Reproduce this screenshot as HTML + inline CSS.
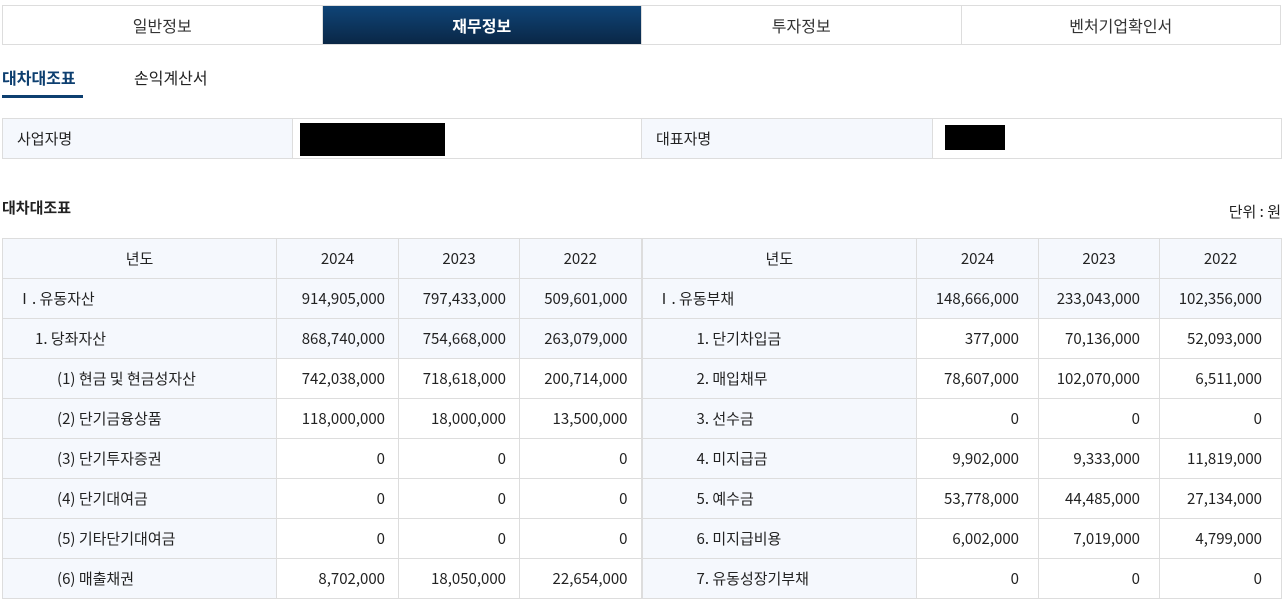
<!DOCTYPE html>
<html><head><meta charset="utf-8"><style>
*{box-sizing:border-box;margin:0;padding:0}
body{width:1287px;height:599px;overflow:hidden;background:#fff;font-family:"Noto Sans CJK KR","Liberation Sans",sans-serif;color:#222;font-size:15px;position:relative}
.abs{position:absolute}
.tabs{left:2px;top:5px;width:1279px;height:40px;display:flex;border:1px solid #ddd}
.tabs div{flex:1;text-align:center;line-height:38px;font-size:16px;border-left:1px solid #ddd;color:#333}
.tabs div:first-child{border-left:none}
.tabs .on{background:linear-gradient(#0f4477,#0a2746);color:#fff;font-weight:bold}
table{border-collapse:collapse;position:absolute;table-layout:fixed}
td{border:1px solid #ddd;height:40px;padding:0 14px;line-height:20px}
.lb{background:#f5f8fd}
.r{text-align:right;padding-right:13px}
.rt .r{padding-right:19px}
.c{text-align:center}
</style></head><body>
<div class="abs tabs"><div>일반정보</div><div class="on">재무정보</div><div>투자정보</div><div>벤처기업확인서</div></div>
<div class="abs" style="left:2px;top:65px;font-size:16px;font-weight:bold;color:#0d3f70">대차대조표</div>
<div class="abs" style="left:2px;top:95px;width:81px;height:3px;background:#0d3f70"></div>
<div class="abs" style="left:134px;top:65px;font-size:16px">손익계산서</div>
<table style="left:2px;top:118px;width:1279px">
<col style="width:290px"><col style="width:349px"><col style="width:291px"><col style="width:349px">
<tr><td class="lb">사업자명</td><td></td><td class="lb">대표자명</td><td></td></tr></table>
<div class="abs" style="left:300px;top:123px;width:145px;height:33px;background:#000"></div>
<div class="abs" style="left:945px;top:125px;width:60px;height:25px;background:#000"></div>
<div class="abs" style="left:2px;top:197px;font-weight:bold">대차대조표</div>
<div class="abs" style="right:6px;top:201px">단위 : 원</div>
<table style="left:2px;top:238px;width:1279px">
<col style="width:274px"><col style="width:122px"><col style="width:121px"><col style="width:122px"><col style="width:275px"><col style="width:122px"><col style="width:121px"><col style="width:122px">
<tr class="lb"><td class="c">년도</td><td class="c">2024</td><td class="c">2023</td><td class="c" style="border-right:2px solid #ddd">2022</td><td class="c">년도</td><td class="c">2024</td><td class="c">2023</td><td class="c">2022</td></tr>
<tr class="lb rt2"><td>Ⅰ. 유동자산</td><td class="r">914,905,000</td><td class="r">797,433,000</td><td class="r" style="border-right:2px solid #ddd">509,601,000</td><td>Ⅰ. 유동부채</td><td class="r" style="padding-right:19px">148,666,000</td><td class="r" style="padding-right:19px">233,043,000</td><td class="r" style="padding-right:19px">102,356,000</td></tr>
<tr class="lb"><td style="padding-left:32px">1. 당좌자산</td><td class="r">868,740,000</td><td class="r">754,668,000</td><td class="r" style="border-right:2px solid #ddd">263,079,000</td><td style="padding-left:54px">1. 단기차입금</td><td class="r" style="background:#fff;padding-right:19px">377,000</td><td class="r" style="background:#fff;padding-right:19px">70,136,000</td><td class="r" style="background:#fff;padding-right:19px">52,093,000</td></tr>
<tr><td class="lb" style="padding-left:54px">(1) 현금 및 현금성자산</td><td class="r">742,038,000</td><td class="r">718,618,000</td><td class="r" style="border-right:2px solid #ddd">200,714,000</td><td class="lb" style="padding-left:54px">2. 매입채무</td><td class="r" style="padding-right:19px">78,607,000</td><td class="r" style="padding-right:19px">102,070,000</td><td class="r" style="padding-right:19px">6,511,000</td></tr>
<tr><td class="lb" style="padding-left:54px">(2) 단기금융상품</td><td class="r">118,000,000</td><td class="r">18,000,000</td><td class="r" style="border-right:2px solid #ddd">13,500,000</td><td class="lb" style="padding-left:54px">3. 선수금</td><td class="r" style="padding-right:19px">0</td><td class="r" style="padding-right:19px">0</td><td class="r" style="padding-right:19px">0</td></tr>
<tr><td class="lb" style="padding-left:54px">(3) 단기투자증권</td><td class="r">0</td><td class="r">0</td><td class="r" style="border-right:2px solid #ddd">0</td><td class="lb" style="padding-left:54px">4. 미지급금</td><td class="r" style="padding-right:19px">9,902,000</td><td class="r" style="padding-right:19px">9,333,000</td><td class="r" style="padding-right:19px">11,819,000</td></tr>
<tr><td class="lb" style="padding-left:54px">(4) 단기대여금</td><td class="r">0</td><td class="r">0</td><td class="r" style="border-right:2px solid #ddd">0</td><td class="lb" style="padding-left:54px">5. 예수금</td><td class="r" style="padding-right:19px">53,778,000</td><td class="r" style="padding-right:19px">44,485,000</td><td class="r" style="padding-right:19px">27,134,000</td></tr>
<tr><td class="lb" style="padding-left:54px">(5) 기타단기대여금</td><td class="r">0</td><td class="r">0</td><td class="r" style="border-right:2px solid #ddd">0</td><td class="lb" style="padding-left:54px">6. 미지급비용</td><td class="r" style="padding-right:19px">6,002,000</td><td class="r" style="padding-right:19px">7,019,000</td><td class="r" style="padding-right:19px">4,799,000</td></tr>
<tr><td class="lb" style="padding-left:54px">(6) 매출채권</td><td class="r">8,702,000</td><td class="r">18,050,000</td><td class="r" style="border-right:2px solid #ddd">22,654,000</td><td class="lb" style="padding-left:54px">7. 유동성장기부채</td><td class="r" style="padding-right:19px">0</td><td class="r" style="padding-right:19px">0</td><td class="r" style="padding-right:19px">0</td></tr>
</table>
</body></html>
